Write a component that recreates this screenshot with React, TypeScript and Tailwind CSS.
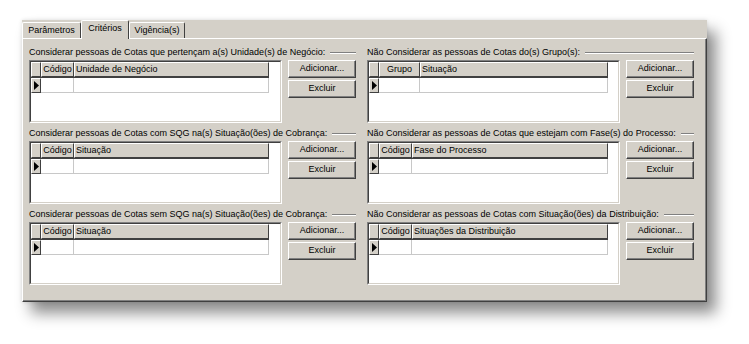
import React from 'react';

/* ------------------------------------------------------------------ */
/*  Data                                                               */
/* ------------------------------------------------------------------ */

interface GridSection {
  label: string;
  firstCol: { title: string; width: string };
  secondCol: { title: string; width: string };
}

const leftSections: GridSection[] = [
  {
    label: 'Considerar pessoas de Cotas que pertençam a(s) Unidade(s) de Negócio:',
    firstCol: { title: 'Código', width: 'w-[33px]' },
    secondCol: { title: 'Unidade de Negócio', width: 'w-[195px]' },
  },
  {
    label: 'Considerar pessoas de Cotas com SQG na(s) Situação(ões) de Cobrança:',
    firstCol: { title: 'Código', width: 'w-[33px]' },
    secondCol: { title: 'Situação', width: 'w-[195px]' },
  },
  {
    label: 'Considerar pessoas de Cotas sem SQG na(s) Situação(ões) de Cobrança:',
    firstCol: { title: 'Código', width: 'w-[33px]' },
    secondCol: { title: 'Situação', width: 'w-[195px]' },
  },
];

const rightSections: GridSection[] = [
  {
    label: 'Não Considerar as pessoas de Cotas do(s) Grupo(s):',
    firstCol: { title: 'Grupo', width: 'w-[41px]' },
    secondCol: { title: 'Situação', width: 'w-[188px]' },
  },
  {
    label: 'Não Considerar as pessoas de Cotas que estejam com Fase(s) do Processo:',
    firstCol: { title: 'Código', width: 'w-[33px]' },
    secondCol: { title: 'Fase do Processo', width: 'w-[196px]' },
  },
  {
    label: 'Não Considerar as pessoas de Cotas com Situação(ões) da Distribuição:',
    firstCol: { title: 'Código', width: 'w-[33px]' },
    secondCol: { title: 'Situações da Distribuição', width: 'w-[196px]' },
  },
];

const tabs = [
  { name: 'Parâmetros', width: 'w-[59px]', active: false },
  { name: 'Critérios', width: 'w-[48px]', active: true },
  { name: 'Vigência(s)', width: 'w-[56px]', active: false },
];

/* ------------------------------------------------------------------ */
/*  Pieces                                                             */
/* ------------------------------------------------------------------ */

function Win98Button({ children }: { children: React.ReactNode }) {
  return (
    <button className="flex h-[18px] w-[68px] items-center justify-center border border-t-white border-l-white border-r-[#404040] border-b-[#404040] bg-[#d4d0c8] shadow-[inset_-1px_-1px_0_#808080] text-black">
      {children}
    </button>
  );
}

function HeaderCell({
  width,
  children,
  centered,
}: {
  width: string;
  children?: React.ReactNode;
  centered?: boolean;
}) {
  return (
    <div
      className={`flex h-[15px] shrink-0 items-center border border-t-white border-l-white border-r-[#404040] border-b-[#404040] bg-[#d4d0c8] ${width} ${centered ? 'justify-center' : 'pl-[1px]'}`}
    >
      {children}
    </div>
  );
}

function DataGrid({ section }: { section: GridSection }) {
  return (
    <div className="h-[63px] w-[253px] border border-t-[#808080] border-l-[#808080] border-r-white border-b-white">
      <div className="h-full w-full overflow-hidden border border-t-[#404040] border-l-[#404040] border-r-[#d4d0c8] border-b-[#d4d0c8] bg-white">
        {/* Header row */}
        <div className="flex">
          <div className="flex border-b border-[#404040]">
            <HeaderCell width="w-[10px]" />
            <HeaderCell width={section.firstCol.width} centered>
              {section.firstCol.title}
            </HeaderCell>
            <HeaderCell width={section.secondCol.width}>
              {section.secondCol.title}
            </HeaderCell>
          </div>
        </div>
        {/* First (empty) row */}
        <div className="flex">
          <div className="flex h-[15px] w-[10px] shrink-0 items-center justify-center border border-t-white border-l-white border-r-[#404040] border-b-[#404040] bg-[#d4d0c8]">
            <svg width="5" height="9" viewBox="0 0 5 9">
              <polygon points="0,0 5,4.5 0,9" fill="#000" />
            </svg>
          </div>
          <div
            className={`h-[15px] shrink-0 border-r border-b border-[#c8c8c8] ${section.firstCol.width}`}
          />
          <div
            className={`h-[15px] shrink-0 border-r border-b border-[#c8c8c8] ${section.secondCol.width}`}
          />
        </div>
      </div>
    </div>
  );
}

function Section({ section }: { section: GridSection }) {
  return (
    <div className="flex flex-col">
      <div className="flex h-[15px] items-center">
        <span className="whitespace-nowrap">{section.label}</span>
        <div className="ml-[5px] h-[2px] flex-1 border-t border-b border-t-[#808080] border-b-white" />
      </div>
      <div className="flex gap-[6px]">
        <DataGrid section={section} />
        <div className="flex flex-col gap-[2px]">
          <Win98Button>Adicionar...</Win98Button>
          <Win98Button>Excluir</Win98Button>
        </div>
      </div>
    </div>
  );
}

/* ------------------------------------------------------------------ */
/*  Page                                                               */
/* ------------------------------------------------------------------ */

export default function App() {
  return (
    <div
      className="h-[344px] w-[749px] overflow-hidden bg-white pl-[22px] pt-[20px] text-[9px] text-black"
      style={{ fontFamily: '"Liberation Sans", Arial, sans-serif' }}
    >
      <div className="flex h-[282px] w-[685px] flex-col bg-[#d4d0c8] shadow-[9px_11px_14px_rgba(0,0,0,0.45),0_0_4px_rgba(0,0,0,0.12)]">
        {/* Tab strip */}
        <div className="relative z-10 flex h-[18px] items-end">
          {tabs.map((tab) => (
            <div
              key={tab.name}
              className={`flex shrink-0 items-center justify-center rounded-t-[2px] border-t border-l border-r border-t-white border-l-white border-r-[#404040] bg-[#d4d0c8] ${tab.width} ${
                tab.active ? '-mb-[1px] h-[19px] pb-[3px]' : 'h-[16px]'
              }`}
            >
              {tab.name}
            </div>
          ))}
        </div>

        {/* Tab panel */}
        <div className="flex flex-1 gap-[11px] border border-t-white border-l-white border-r-[#404040] border-b-[#404040] px-[6px] pt-[6px] shadow-[inset_-1px_-1px_0_#808080]">
          <div className="flex w-[327px] flex-col gap-[3px]">
            {leftSections.map((s) => (
              <Section key={s.label} section={s} />
            ))}
          </div>
          <div className="flex w-[327px] flex-col gap-[3px]">
            {rightSections.map((s) => (
              <Section key={s.label} section={s} />
            ))}
          </div>
        </div>
      </div>
    </div>
  );
}
